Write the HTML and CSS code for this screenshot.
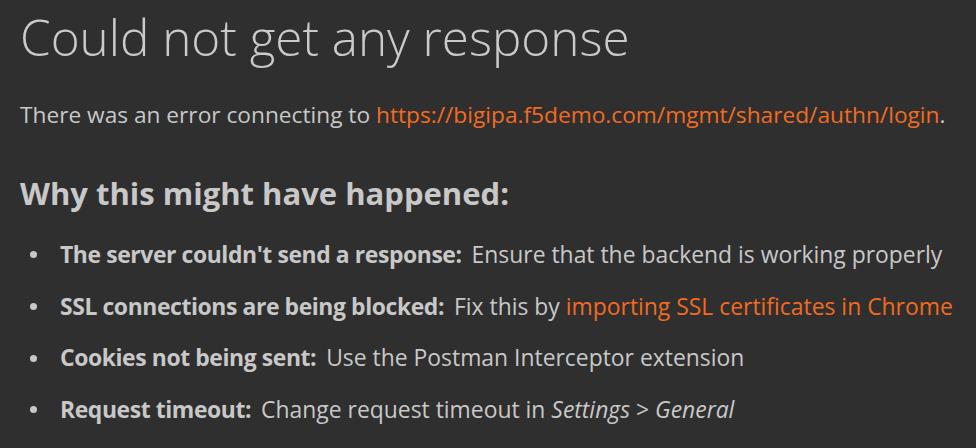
FILE: index.html
```html
<!DOCTYPE html>
<html>
<head>
<meta charset="utf-8">
<link rel="stylesheet" href="styles.css">
</head>
<body>
<div class="page">
  <h1 class="title">Could not get any response</h1>
  <p class="intro">There was an error connecting to <a class="link" href="#">https://bigipa.f5demo.com/mgmt/shared/authn/login</a>.</p>
  <h2 class="why">Why this might have happened:</h2>
  <ul class="reasons">
    <li class="reason"><span class="label">The server couldn't send a response:</span> <span class="fix">Ensure that the backend is working properly</span></li>
    <li class="reason"><span class="label">SSL connections are being blocked:</span> <span class="fix">Fix this by <a class="link" href="#">importing SSL certificates in Chrome</a></span></li>
    <li class="reason"><span class="label">Cookies not being sent:</span> <span class="fix">Use the Postman Interceptor extension</span></li>
    <li class="reason"><span class="label">Request timeout:</span> <span class="fix">Change request timeout in <em>Settings</em> &gt; <em>General</em></span></li>
  </ul>
</div>
</body>
</html>
```

FILE: styles.css
```css
html, body {
  margin: 0;
  padding: 0;
  background: #2f2f2f;
}
.page {
  width: 976px;
  height: 448px;
  overflow: hidden;
  box-sizing: border-box;
  padding: 8px 0 0 20px;
  font-family: "Open Sans", "Noto Sans", sans-serif;
  color: #c8c8c8;
  white-space: nowrap;
}
.title {
  margin: 0;
  font-size: 49.4px;
  font-weight: 300;
  line-height: 57px;
  color: #cacaca;
}
.intro {
  margin: 35.5px 0 0 0;
  font-size: 22.7px;
  line-height: 28px;
}
.link {
  color: #f26b21;
  text-decoration: none;
}
.why {
  margin: 45.5px 0 0 0;
  font-size: 31px;
  font-weight: 700;
  line-height: 38px;
}
.reasons {
  margin: 28.9px 0 0 0;
  padding: 0;
  list-style: none;
}
.reason {
  font-size: 22.9px;
  line-height: 28px;
  margin-bottom: 23.7px;
  padding-left: 40px;
}
.reason::before {
  content: "";
  display: inline-block;
  width: 7px;
  height: 7px;
  border-radius: 50%;
  background: #c8c8c8;
  margin-left: -30px;
  margin-right: 23px;
  vertical-align: 4.5px;
}
.label {
  font-weight: 700;
  letter-spacing: -0.4px;
  margin-right: 4px;
}
```
